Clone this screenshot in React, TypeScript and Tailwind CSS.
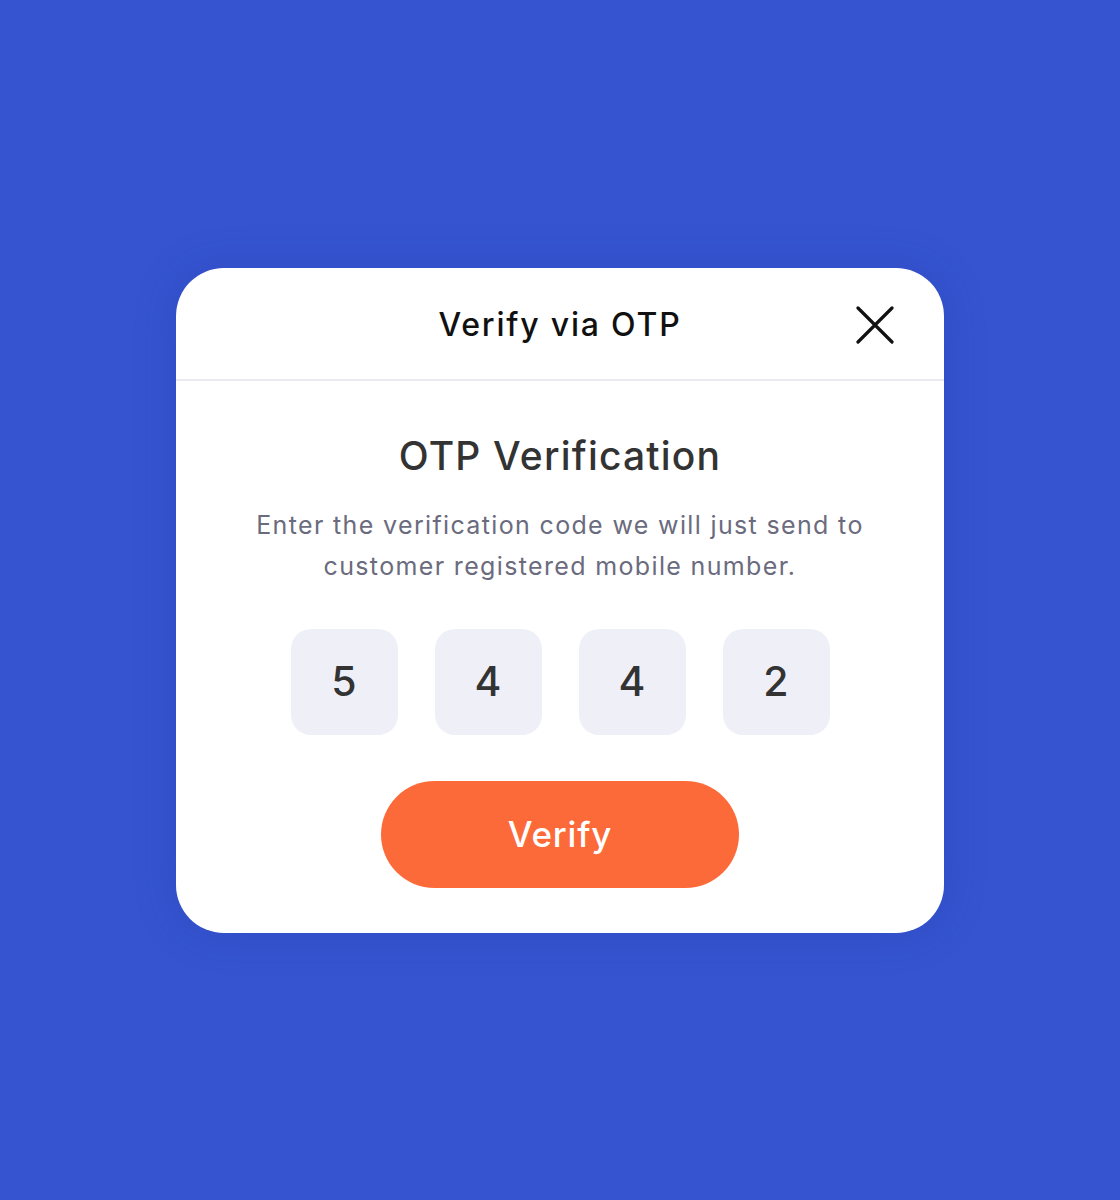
const digits = ["5", "4", "4", "2"];

export default function App() {
    return (
        <div
            className="min-h-[1200px] w-full bg-[#3654d0] flex items-center justify-center"
            style={{ fontFamily: "Inter, 'Open Sans', sans-serif" }}
        >
            <div className="w-[768px] h-[665px] bg-white rounded-[48px] shadow-[0_0_40px_rgba(30,50,160,0.25)] flex flex-col">
                <header className="relative h-[113px] flex items-center justify-center border-b-2 border-[#eaebf0]">
                    <h1 className="pt-[4px] text-[32px] font-medium text-[#111111] tracking-[1.8px]">
                        Verify via OTP
                    </h1>
                    <button className="absolute left-[680px] top-[38px] text-[#111111]">
                        <svg width="38" height="38" viewBox="0 0 38 38">
                            <path
                                d="M2 2 L36 36 M36 2 L2 36"
                                stroke="currentColor"
                                strokeWidth="3.2"
                                strokeLinecap="round"
                            />
                        </svg>
                    </button>
                </header>
                <div className="flex flex-col items-center pt-[52px]">
                    <h2 className="text-[39px] leading-[46px] font-medium text-[#333333] tracking-[1.2px]">
                        OTP Verification
                    </h2>
                    <p className="mt-[26px] text-[25px] leading-[41px] text-[#6b6b7e] text-center tracking-[1.35px]">
                        Enter the verification code we will just send to
                        <br />
                        customer registered mobile number.
                    </p>
                    <div className="mt-[42px] flex gap-[37px]">
                        {digits.map((d, i) => (
                            <div
                                key={i}
                                className="w-[107px] h-[106px] rounded-[20px] bg-[#eff0f7] flex items-center justify-center text-[41px] font-medium text-[#333333]"
                            >
                                {d}
                            </div>
                        ))}
                    </div>
                    <button className="mt-[46px] w-[358px] h-[107px] rounded-full bg-[#fc6a3a] text-white text-[35px] font-medium tracking-[0.8px]">
                        Verify
                    </button>
                </div>
            </div>
        </div>
    );
}
